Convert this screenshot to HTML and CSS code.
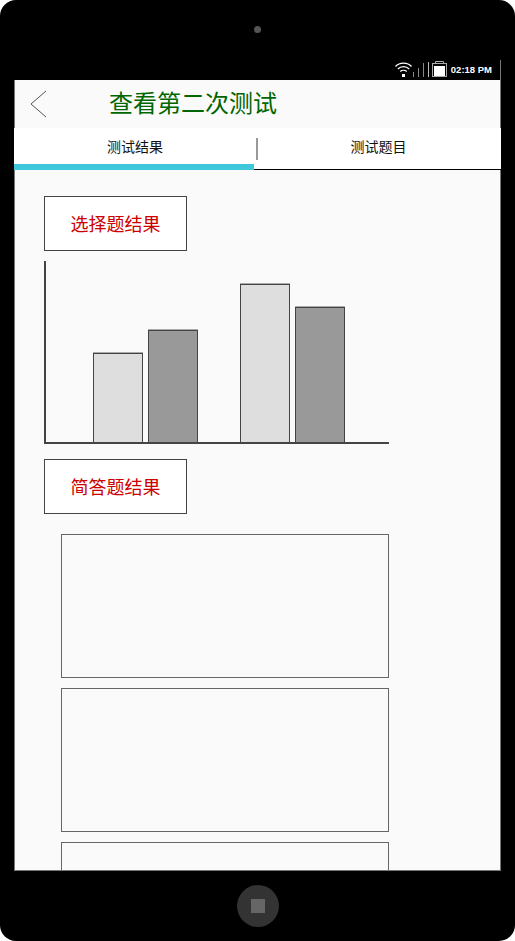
FILE: index.html
```html
<!DOCTYPE html>
<html lang="zh">
<head>
  <meta charset="UTF-8" />
  <meta name="viewport" content="width=device-width, initial-scale=1.0"/>
  <title>查看第二次测试</title>
  <link rel="stylesheet" href="styles.css">
</head>
<body>

  <div class="device">
    <div class="device-top">
      <div class="camera"></div>
      <div class="status-bar">
        <svg class="wifi" width="19" height="16" viewBox="0 0 19 16">
          <path d="M1.5 5.5C5.5 1 13.5 1 17.5 5.5" fill="none" stroke="#fff" stroke-width="1.3"/>
          <path d="M3.8 8C7 4.8 12 4.8 15.2 8" fill="none" stroke="#fff" stroke-width="1.3"/>
          <path d="M6.2 10.5C8 9 11 9 12.8 10.5" fill="none" stroke="#fff" stroke-width="1.3"/>
          <rect x="8" y="13" width="3" height="3" fill="#fff"/>
        </svg>
        <div class="signal">
          <span class="signal-bar" style="height: 5px"></span>
          <span class="signal-bar" style="height: 9px"></span>
          <span class="signal-bar" style="height: 14px"></span>
          <span class="signal-bar signal-bar-light" style="height: 15px"></span>
        </div>
        <svg class="battery" width="15" height="16" viewBox="0 0 15 16">
          <path d="M3.5 2.5V0.5H11.5V2.5" fill="none" stroke="#aaa" stroke-width="1"/>
          <rect x="0.5" y="2.5" width="14" height="13" fill="none" stroke="#aaa" stroke-width="1"/>
          <rect x="2" y="5" width="11" height="10" fill="#fff"/>
        </svg>
        <span class="clock">02:18 PM</span>
      </div>
    </div>

    <div class="screen">
      <div class="header">
        <svg class="back" width="17" height="28" viewBox="0 0 17 28">
          <path d="M16 1L1 14L16 27" fill="none" stroke="#555" stroke-width="1"/>
        </svg>
        <h1 class="title">查看第二次测试</h1>
      </div>

      <div class="tabs">
        <div class="tab tab-active">测试结果</div>
        <div class="tab tab-plain">测试题目</div>
      </div>

      <div class="content">
        <div class="result-label">选择题结果</div>

        <div class="chart">
          <div class="bar-group">
            <div class="bar bar-light" style="height: 89px"></div>
            <div class="bar bar-dark" style="height: 112px"></div>
          </div>
          <div class="bar-group">
            <div class="bar bar-light" style="height: 158px"></div>
            <div class="bar bar-dark" style="height: 135px"></div>
          </div>
        </div>

        <div class="result-label">简答题结果</div>

        <div class="answers">
          <div class="answer"></div>
          <div class="answer"></div>
          <div class="answer"></div>
        </div>
      </div>
    </div>

    <div class="device-bottom">
      <div class="home-button"><span class="home-square"></span></div>
    </div>
  </div>

</body>
</html>
```

FILE: styles.css
```css
html, body {
  margin: 0;
  padding: 0;
  background: #fff;
}

body {
  font-family: "Noto Sans CJK SC", "Liberation Sans", sans-serif;
}

.device {
  width: 515px;
  height: 941px;
  background: #000;
  border-radius: 16px;
  display: flex;
  flex-direction: column;
  overflow: hidden;
}

.device-top {
  height: 80px;
  flex: none;
  display: flex;
  flex-direction: column;
  align-items: center;
}

.camera {
  width: 7px;
  height: 7px;
  margin-top: 26px;
  border-radius: 50%;
  background: #555;
}

.status-bar {
  align-self: stretch;
  margin-top: auto;
  height: 20px;
  display: flex;
  align-items: flex-end;
  justify-content: flex-end;
  padding-right: 14px;
}

.status-bar::after {
  content: "";
  width: 1px;
  height: 20px;
  margin-left: 8px;
  background: #777;
}

.wifi {
  margin-bottom: 3px;
}

.signal {
  display: flex;
  align-items: flex-end;
  gap: 4px;
  margin: 0 3px 3px 0;
}

.signal-bar {
  width: 1px;
  background: #888;
}

.signal-bar-light {
  background: #bbb;
}

.battery {
  margin-bottom: 3px;
}

.clock {
  font-family: "Liberation Sans", sans-serif;
  font-size: 9.5px;
  font-weight: bold;
  color: #fff;
  line-height: 12px;
  margin: 0 0 4px 4px;
  white-space: nowrap;
}

.screen {
  height: 791px;
  flex: none;
  margin: 0 14px;
  background: #fafafa;
  border: 1px solid #777;
  border-top: none;
  box-sizing: border-box;
  display: flex;
  flex-direction: column;
}

.header {
  height: 48px;
  flex: none;
  display: flex;
  align-items: center;
  padding-left: 15px;
}

.back {
  flex: none;
}

.title {
  margin: 0 0 4px 62px;
  font-size: 24px;
  font-weight: normal;
  color: #006600;
  line-height: 44px;
}

.tabs {
  height: 42px;
  flex: none;
  margin: 0 -1px;
  display: flex;
  background: #fff;
}

.tab {
  font-size: 14px;
  line-height: 36px;
  padding-left: 2px;
  text-align: center;
  color: #111;
  box-sizing: border-box;
}

.tab-active {
  width: 240px;
  border-bottom: 6px solid #3fc8dc;
}

.tab-plain {
  flex: 1;
  border-bottom: 1px solid #000;
  position: relative;
}

.tab-plain::before {
  content: "";
  position: absolute;
  left: 2px;
  top: 10px;
  width: 2px;
  height: 22px;
  background: #999;
}

.content {
  flex: 1;
  min-height: 0;
  overflow: hidden;
  padding: 26px 0 0 29px;
}

.result-label {
  width: 143px;
  height: 55px;
  box-sizing: border-box;
  border: 1px solid #444;
  background: #fff;
  color: #cc0000;
  font-size: 18px;
  line-height: 53px;
  text-align: center;
}

.chart {
  width: 345px;
  height: 183px;
  margin: 10px 0 15px;
  box-sizing: border-box;
  border-left: 2px solid #444;
  border-bottom: 2px solid #444;
  display: flex;
  align-items: flex-end;
  gap: 42px;
  padding-left: 47px;
}

.bar-group {
  display: flex;
  align-items: flex-end;
  gap: 5px;
}

.bar {
  width: 50px;
  box-sizing: border-box;
  border: 1px solid #444;
  border-bottom: none;
  box-shadow: 0 -1px 0 #aaa;
}

.bar-light {
  background: #dedede;
}

.bar-dark {
  background: #999;
}

.answers {
  display: flex;
  flex-direction: column;
  gap: 10px;
  margin: 20px 0 0 17px;
}

.answer {
  width: 328px;
  height: 144px;
  box-sizing: border-box;
  border: 1px solid #666;
  flex: none;
}

.device-bottom {
  flex: 1;
  display: flex;
  justify-content: center;
  align-items: center;
}

.home-button {
  width: 42px;
  height: 42px;
  border-radius: 50%;
  background: #333;
  display: flex;
  align-items: center;
  justify-content: center;
}

.home-square {
  width: 14px;
  height: 14px;
  background: #666;
}
```
